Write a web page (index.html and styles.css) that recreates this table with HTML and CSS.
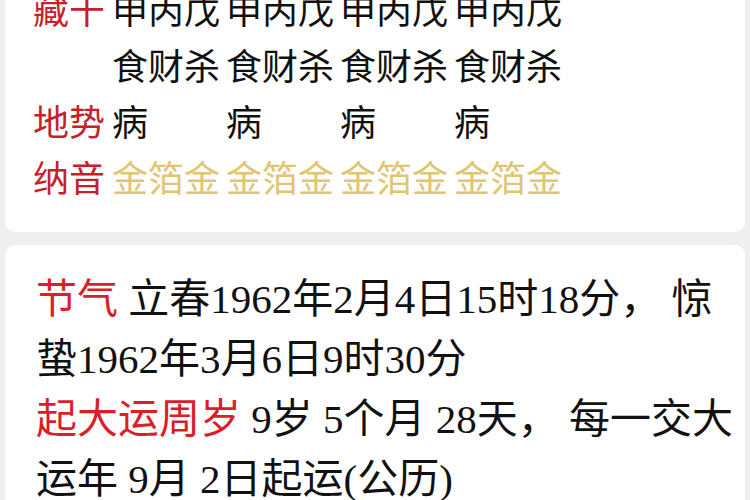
FILE: index.html
```html
<!DOCTYPE html>
<html lang="zh-CN">
<head>
<meta charset="utf-8">
<title>八字排盘</title>
<link rel="stylesheet" href="styles.css">
</head>
<body>
<div class="page">
  <section class="card pillars">
    <div class="row">
      <span class="label">藏干</span>
      <span class="cell">申丙戊</span><span class="cell">申丙戊</span><span class="cell">申丙戊</span><span class="cell">申丙戊</span>
    </div>
    <div class="row">
      <span class="label"></span>
      <span class="cell">食财杀</span><span class="cell">食财杀</span><span class="cell">食财杀</span><span class="cell">食财杀</span>
    </div>
    <div class="row">
      <span class="label">地势</span>
      <span class="cell">病</span><span class="cell">病</span><span class="cell">病</span><span class="cell">病</span>
    </div>
    <div class="row">
      <span class="label">纳音</span>
      <span class="cell gold">金箔金</span><span class="cell gold">金箔金</span><span class="cell gold">金箔金</span><span class="cell gold">金箔金</span>
    </div>
  </section>
  <section class="card info">
    <p><span class="key">节气</span> 立春1962年2月4日15时18分， 惊蛰1962年3月6日9时30分</p>
    <p><span class="key">起大运周岁</span> 9岁 5个月 28天， 每一交大运年 9月 2日起运(公历)</p>
  </section>
</div>
</body>
</html>
```

FILE: styles.css
```css
html, body {
  margin: 0;
  padding: 0;
  background: #efefef;
}
.page {
  width: 750px;
  height: 500px;
  overflow: hidden;
  display: flex;
  flex-direction: column;
  gap: 13px;
}
.card {
  background: #ffffff;
  margin: 0 5px;
  border-radius: 10px;
}
.pillars {
  margin-top: -20px;
  padding: 0 0 28px 28px;
  font-family: "Noto Sans CJK SC", sans-serif;
  font-size: 36px;
  line-height: 56px;
  color: #111111;
}
.row {
  display: grid;
  grid-template-columns: 79px repeat(4, 114px);
  height: 56px;
}
.label {
  color: #c8202a;
  white-space: nowrap;
}
.cell {
  white-space: nowrap;
}
.gold {
  color: #dfc675;
}
.info {
  padding: 24px 10px 0 31px;
  font-family: "Liberation Serif", "Noto Sans CJK SC", serif;
  font-size: 41px;
  line-height: 60px;
  color: #111111;
  flex: 1;
}
.info p {
  margin: 0;
}
.key {
  color: #dc1e28;
  font-family: "Noto Sans CJK SC", sans-serif;
  line-height: 1;
}
```
